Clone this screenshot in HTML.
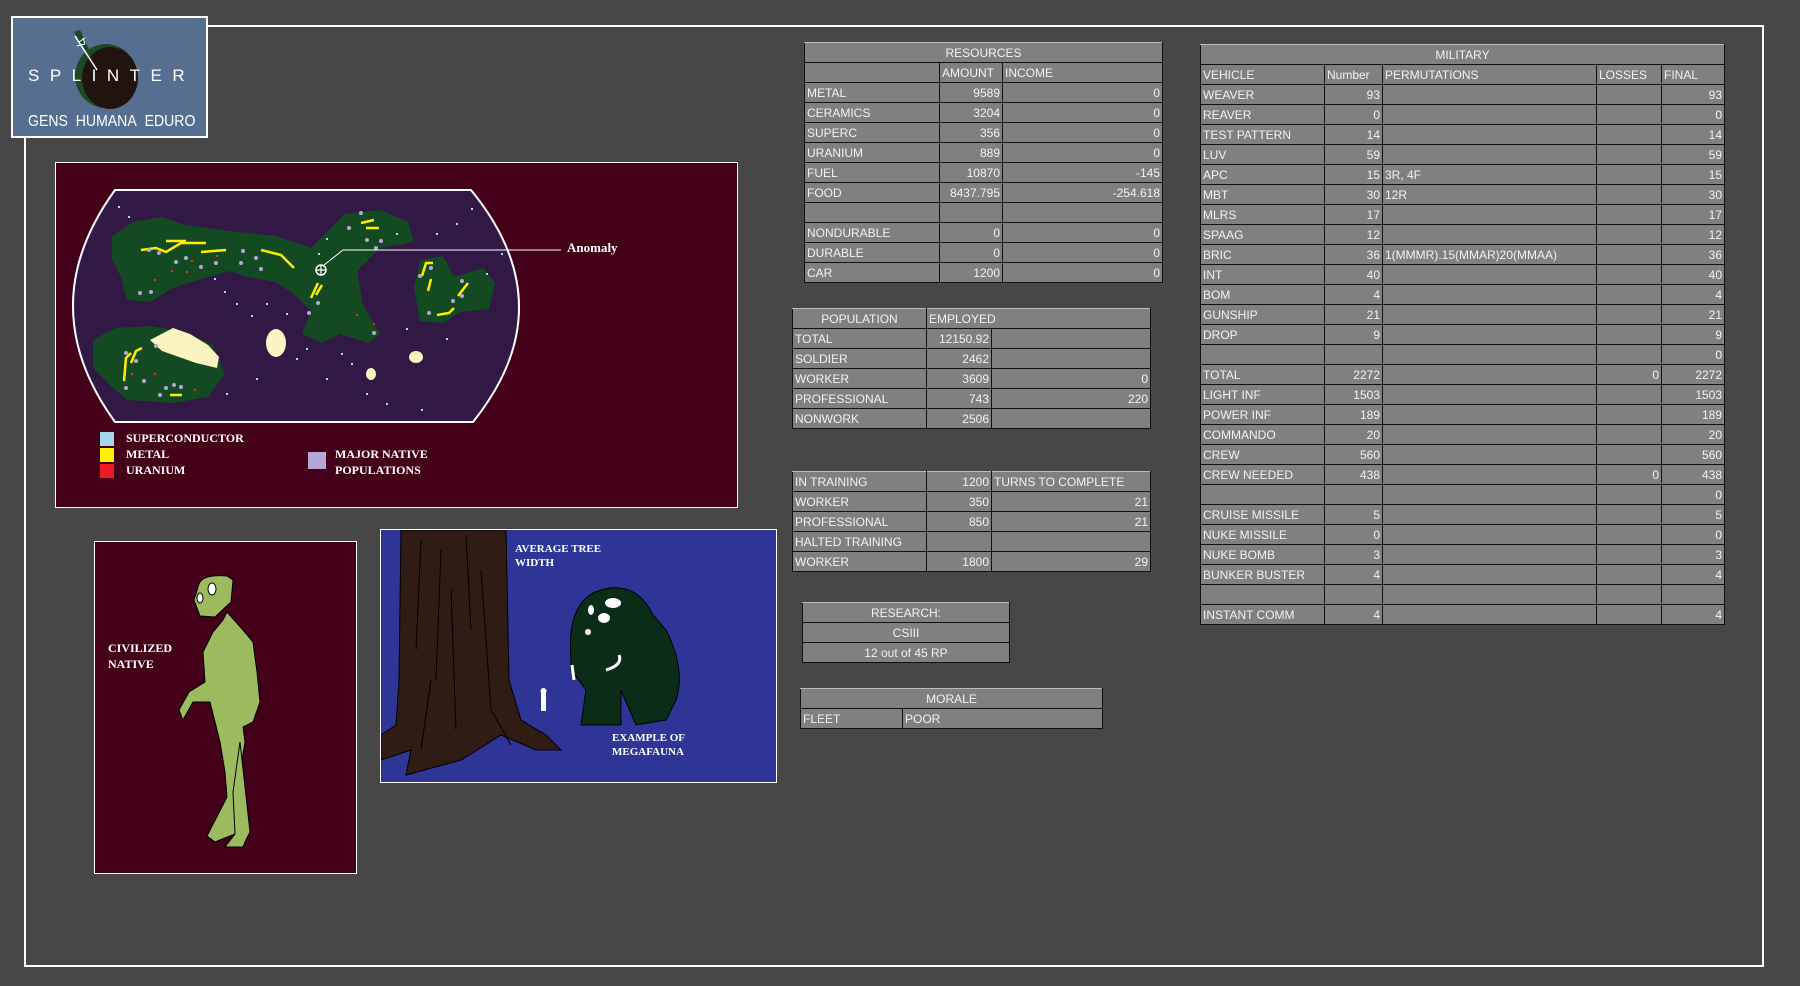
<!DOCTYPE html>
<html><head><meta charset="utf-8"><style>
body{margin:0;width:1800px;height:986px;background:#474747;position:relative;overflow:hidden;font-family:"Liberation Sans",sans-serif}
.abs{position:absolute}
table.t{position:absolute;border-collapse:collapse;table-layout:fixed}
table.t td{height:19px;border:1px solid #111;padding:0 2px;background:#808080;color:#f2f2f2;font:12px/18px "Liberation Sans",sans-serif;white-space:nowrap;overflow:hidden}
table.t tr:first-child td{border-top-color:#bbb}
.r{text-align:right}.c{text-align:center}
.lbl{position:absolute;font:bold 12px/16px "Liberation Serif",serif;color:#fff;white-space:nowrap}
</style></head><body>
<div class="abs" style="left:24px;top:25px;width:1736px;height:938px;border:2px solid #fff"></div>

<!-- logo -->
<div class="abs" style="left:11px;top:16px;width:193px;height:118px;background:#566f90;border:2px solid #fff;overflow:hidden">
<svg width="193" height="118" style="position:absolute;left:0;top:0">
<ellipse cx="93" cy="58" rx="31" ry="32" fill="#1d4a24"/>
<ellipse cx="97" cy="60" rx="28" ry="31" fill="#21140f"/>
<path d="M61 14 L67 12 L80 40 L70 30Z" fill="#1d4a24"/>
<path d="M62 18 L84 52" stroke="#fff" stroke-width="1.5"/>
<path d="M66 24 l6 -4 M64 28 l8 -2 M70 20 l2 6" stroke="#fff" stroke-width="1"/>
</svg>
<div class="abs" style="left:15px;top:48px;width:175px;color:#fff;font:17px/20px 'Liberation Sans',sans-serif;letter-spacing:10.5px;white-space:nowrap">SPLINTER</div>
<div class="abs" style="left:15px;top:95px;color:#fff;font:16px/18px 'Liberation Sans',sans-serif;white-space:nowrap;transform:scaleX(0.88);transform-origin:left">GENS&nbsp; HUMANA&nbsp; EDURO</div>
</div>

<!-- map -->
<div class="abs" style="left:55px;top:162px;width:681px;height:344px;background:#450019;border:1px solid #fff">
<svg width="683" height="346" class="abs" style="left:0;top:0">
<path d="M59 27 L415 27 Q510 143 417 259 L59 259 Q-25 143 59 27Z" fill="#311845" stroke="#fff" stroke-width="2"/>
<path d="M56 73 L77 59 L106 54 L129 62 L174 68 L220 73 L255 85 L278 62 L289 51 L324 47 L352 59 L358 79 L324 85 L301 108 L307 142 L324 171 L312 180 L284 171 L266 180 L246 171 L255 148 L238 131 L220 119 L192 114 L174 108 L152 114 L117 125 L94 139 L71 137 L65 114 L56 96Z" fill="#144a22"/>
<path d="M364 97 L387 93 L398 114 L427 105 L439 120 L433 146 L404 149 L387 160 L364 158 L358 125Z" fill="#144a22"/>
<path d="M37 177 L60 165 L94 163 L129 169 L157 182 L169 211 L152 234 L117 240 L71 237 L54 222 L37 205Z" fill="#144a22"/>
<path d="M94 177 L117 165 L134 171 L152 182 L163 194 L161 205 L140 200 L123 194 L106 188Z" fill="#fbf3c0"/>
<ellipse cx="220" cy="180" rx="10" ry="14" fill="#fbf3c0"/>
<ellipse cx="360" cy="194" rx="7" ry="6" fill="#fbf3c0"/>
<ellipse cx="315" cy="211" rx="5" ry="6" fill="#fbf3c0"/>
<g stroke="#ffee00" stroke-width="2.5" fill="none">
<path d="M85 87 L100 85 L110 89 L125 80 L150 80"/><path d="M110 78 L130 78"/><path d="M145 89 L170 87"/>
<path d="M205 87 L225 92 L238 105"/><path d="M305 60 L318 57"/><path d="M310 65 L323 65"/>
<path d="M366 113 L370 100 L377 100"/><path d="M372 128 L375 116"/><path d="M402 133 L412 120"/><path d="M381 152 L393 150 L398 145"/>
<path d="M255 135 L262 120"/><path d="M260 132 L266 122"/>
<path d="M68 218 L70 195 L75 190"/><path d="M75 200 L80 188 L86 185"/><path d="M114 232 L126 232"/>
</g>
<g fill="#b7a6d8">
<circle cx="93" cy="87" r="2"/><circle cx="103" cy="90" r="2"/><circle cx="130" cy="95" r="2"/><circle cx="145" cy="104" r="2"/><circle cx="160" cy="100" r="2"/><circle cx="185" cy="100" r="2"/><circle cx="200" cy="95" r="2"/><circle cx="187" cy="88" r="2"/><circle cx="120" cy="99" r="2"/><circle cx="84" cy="130" r="2"/><circle cx="95" cy="129" r="2"/><circle cx="205" cy="106" r="2"/>
<circle cx="305" cy="50" r="2"/><circle cx="293" cy="65" r="2"/><circle cx="311" cy="77" r="2"/><circle cx="325" cy="78" r="2"/><circle cx="320" cy="85" r="2"/>
<circle cx="375" cy="105" r="2"/><circle cx="364" cy="113" r="2"/><circle cx="406" cy="118" r="2"/><circle cx="406" cy="133" r="2"/><circle cx="397" cy="138" r="2"/><circle cx="373" cy="150" r="2"/>
<circle cx="262" cy="140" r="2"/><circle cx="253" cy="150" r="2"/><circle cx="318" cy="170" r="2"/>
<circle cx="70" cy="190" r="2"/><circle cx="100" cy="183" r="2"/><circle cx="80" cy="198" r="2"/><circle cx="88" cy="218" r="2"/><circle cx="70" cy="225" r="2"/><circle cx="118" cy="222" r="2"/><circle cx="125" cy="224" r="2"/><circle cx="110" cy="225" r="2"/><circle cx="104" cy="232" r="2"/>
</g>
<g fill="#ff2020"><rect x="135" y="97" width="2" height="2"/><rect x="160" y="92" width="2" height="2"/><rect x="115" y="107" width="2" height="2"/><rect x="98" y="116" width="2" height="2"/><rect x="130" y="108" width="2" height="2"/><rect x="300" y="151" width="2" height="2"/><rect x="317" y="160" width="2" height="2"/><rect x="75" y="210" width="2" height="2"/><rect x="98" y="210" width="2" height="2"/><rect x="138" y="226" width="2" height="2"/></g>
<g fill="#9fe0ee"><rect x="62" y="43" width="2" height="2"/><rect x="72" y="53" width="2" height="2"/><rect x="158" y="115" width="2" height="2"/><rect x="168" y="128" width="2" height="2"/><rect x="180" y="140" width="2" height="2"/><rect x="195" y="152" width="2" height="2"/><rect x="210" y="140" width="2" height="2"/><rect x="230" y="150" width="2" height="2"/><rect x="240" y="195" width="2" height="2"/><rect x="250" y="185" width="2" height="2"/><rect x="295" y="200" width="2" height="2"/><rect x="310" y="230" width="2" height="2"/><rect x="330" y="240" width="2" height="2"/><rect x="365" y="246" width="2" height="2"/><rect x="380" y="70" width="2" height="2"/><rect x="400" y="60" width="2" height="2"/><rect x="415" y="45" width="2" height="2"/><rect x="445" y="90" width="2" height="2"/><rect x="430" y="110" width="2" height="2"/><rect x="350" y="165" width="2" height="2"/><rect x="390" y="175" width="2" height="2"/><rect x="285" y="190" width="2" height="2"/><rect x="270" y="215" width="2" height="2"/><rect x="200" y="215" width="2" height="2"/><rect x="170" y="230" width="2" height="2"/><rect x="270" y="75" width="2" height="2"/><rect x="262" y="90" width="2" height="2"/><rect x="340" y="70" width="2" height="2"/></g>
<circle cx="265" cy="107" r="5" fill="none" stroke="#fff" stroke-width="1.5"/><path d="M260 107h10M265 102v10" stroke="#fff" stroke-width="1.2"/>
<path d="M268 102 L287 87 L505 87" stroke="#fff" stroke-width="1" fill="none"/>
<rect x="44" y="269" width="14" height="14" fill="#a3d8ea"/><rect x="44" y="285" width="14" height="14" fill="#fff200"/><rect x="44" y="301" width="14" height="14" fill="#ed1c24"/><rect x="252" y="289" width="18" height="17" fill="#b4a7d6"/>
</svg>
<div class="lbl" style="left:511px;top:77px;font-size:13px">Anomaly</div>
<div class="lbl" style="left:70px;top:267px">SUPERCONDUCTOR<br>METAL<br>URANIUM</div>
<div class="lbl" style="left:279px;top:283px">MAJOR NATIVE<br>POPULATIONS</div>
</div>

<!-- native -->
<div class="abs" style="left:94px;top:541px;width:261px;height:331px;background:#450019;border:1px solid #fff;overflow:hidden">
<svg width="263" height="333" class="abs" style="left:0;top:0">
<g fill="#9cbb5f" stroke="#000" stroke-width="1">
<path d="M104 42 Q108 32 132 34 L138 38 L136 60 L120 75 L105 74 L99 58Z"/>
<path d="M132 70 L148 88 L158 100 L162 130 L165 160 L158 180 L148 185 L150 200 L145 230 L150 250 L140 292 L120 300 L112 294 L132 255 L130 230 L125 200 L115 160 L98 160 L88 178 L84 168 L94 150 L110 140 L108 110 L118 90 L128 78Z"/>
<path d="M145 200 L150 245 L155 290 L150 300 L148 305 L130 305 L140 292 L138 250Z"/>
</g>
<ellipse cx="117" cy="47" rx="4" ry="6" fill="#fff" stroke="#000"/><ellipse cx="105" cy="56" rx="3" ry="5" fill="#fff" stroke="#000"/>
</svg>
<div class="lbl" style="left:13px;top:98px">CIVILIZED<br>NATIVE</div>
</div>

<!-- tree -->
<div class="abs" style="left:380px;top:529px;width:395px;height:252px;background:#2e3597;border:1px solid #fff;overflow:hidden">
<svg width="397" height="254" class="abs" style="left:0;top:0">
<path d="M20 0 L125 0 L128 150 L140 190 L165 205 L180 220 L155 220 L120 205 L80 230 L25 245 L30 220 L0 230 L0 205 L15 195 L18 150Z" fill="#311c15" stroke="#000"/>
<g stroke="#000" stroke-width="1"><path d="M40 10 L35 120 M60 20 L55 150 M85 5 L90 100 M100 40 L110 180 M70 60 L75 200 M50 150 L40 220 M110 180 L130 215"/></g>
<path d="M190 130 Q185 70 220 60 Q255 50 272 85 L285 100 Q305 140 295 170 L285 190 L255 195 L240 160 L240 195 L200 195 L205 160 L190 140Z" fill="#0b2d18" stroke="#000"/>
<ellipse cx="232" cy="73" rx="8" ry="5" fill="#fff"/><ellipse cx="223" cy="88" rx="6" ry="5" fill="#fff"/><ellipse cx="210" cy="80" rx="3" ry="5" fill="#fff"/><ellipse cx="207" cy="102" rx="3" ry="3" fill="#fff"/>
<path d="M225 140 Q242 135 238 125" stroke="#fff" stroke-width="3" fill="none"/>
<path d="M191 135 L193 150" stroke="#fff" stroke-width="3"/>
<rect x="160" y="163" width="5" height="18" fill="#fff"/><circle cx="162.5" cy="161" r="3" fill="#fff"/>
</svg>
<div class="lbl" style="left:134px;top:12px;font-size:11px;line-height:14px">AVERAGE TREE<br>WIDTH</div>
<div class="lbl" style="left:231px;top:201px;font-size:11px;line-height:14px">EXAMPLE OF<br>MEGAFAUNA</div>
</div>

<!-- resources -->
<table class="t" style="left:804px;top:42px;width:358px">
<colgroup><col style="width:135px"><col style="width:63px"><col style="width:160px"></colgroup>
<tr><td colspan="3" class="c">RESOURCES</td></tr>
<tr><td></td><td>AMOUNT</td><td>INCOME</td></tr>
<tr><td>METAL</td><td class="r">9589</td><td class="r">0</td></tr>
<tr><td>CERAMICS</td><td class="r">3204</td><td class="r">0</td></tr>
<tr><td>SUPERC</td><td class="r">356</td><td class="r">0</td></tr>
<tr><td>URANIUM</td><td class="r">889</td><td class="r">0</td></tr>
<tr><td>FUEL</td><td class="r">10870</td><td class="r">-145</td></tr>
<tr><td>FOOD</td><td class="r">8437.795</td><td class="r">-254.618</td></tr>
<tr><td></td><td></td><td></td></tr>
<tr><td>NONDURABLE</td><td class="r">0</td><td class="r">0</td></tr>
<tr><td>DURABLE</td><td class="r">0</td><td class="r">0</td></tr>
<tr><td>CAR</td><td class="r">1200</td><td class="r">0</td></tr>
</table>

<!-- population -->
<table class="t" style="left:792px;top:308px;width:358px">
<colgroup><col style="width:134px"><col style="width:65px"><col style="width:159px"></colgroup>
<tr><td class="c">POPULATION</td><td colspan="2">EMPLOYED</td></tr>
<tr><td>TOTAL</td><td class="r">12150.92</td><td></td></tr>
<tr><td>SOLDIER</td><td class="r">2462</td><td></td></tr>
<tr><td>WORKER</td><td class="r">3609</td><td class="r">0</td></tr>
<tr><td>PROFESSIONAL</td><td class="r">743</td><td class="r">220</td></tr>
<tr><td>NONWORK</td><td class="r">2506</td><td></td></tr>
</table>

<table class="t" style="left:792px;top:471px;width:358px">
<colgroup><col style="width:134px"><col style="width:65px"><col style="width:159px"></colgroup>
<tr><td>IN TRAINING</td><td class="r">1200</td><td>TURNS TO COMPLETE</td></tr>
<tr><td>WORKER</td><td class="r">350</td><td class="r">21</td></tr>
<tr><td>PROFESSIONAL</td><td class="r">850</td><td class="r">21</td></tr>
<tr><td>HALTED TRAINING</td><td></td><td></td></tr>
<tr><td>WORKER</td><td class="r">1800</td><td class="r">29</td></tr>
</table>

<table class="t" style="left:802px;top:602px;width:208px">
<tr><td class="c">RESEARCH:</td></tr>
<tr><td class="c">CSIII</td></tr>
<tr><td class="c">12 out of 45 RP</td></tr>
</table>

<table class="t" style="left:800px;top:688px;width:302px">
<colgroup><col style="width:102px"><col style="width:200px"></colgroup>
<tr><td colspan="2" class="c">MORALE</td></tr>
<tr><td>FLEET</td><td>POOR</td></tr>
</table>

<!-- military -->
<table class="t" style="left:1200px;top:44px;width:524px">
<colgroup><col style="width:124px"><col style="width:58px"><col style="width:214px"><col style="width:65px"><col style="width:63px"></colgroup>
<tr><td colspan="5" class="c">MILITARY</td></tr>
<tr><td>VEHICLE</td><td>Number</td><td>PERMUTATIONS</td><td>LOSSES</td><td>FINAL</td></tr>
<tr><td>WEAVER</td><td class="r">93</td><td></td><td></td><td class="r">93</td></tr>
<tr><td>REAVER</td><td class="r">0</td><td></td><td></td><td class="r">0</td></tr>
<tr><td>TEST PATTERN</td><td class="r">14</td><td></td><td></td><td class="r">14</td></tr>
<tr><td>LUV</td><td class="r">59</td><td></td><td></td><td class="r">59</td></tr>
<tr><td>APC</td><td class="r">15</td><td>3R, 4F</td><td></td><td class="r">15</td></tr>
<tr><td>MBT</td><td class="r">30</td><td>12R</td><td></td><td class="r">30</td></tr>
<tr><td>MLRS</td><td class="r">17</td><td></td><td></td><td class="r">17</td></tr>
<tr><td>SPAAG</td><td class="r">12</td><td></td><td></td><td class="r">12</td></tr>
<tr><td>BRIC</td><td class="r">36</td><td>1(MMMR).15(MMAR)20(MMAA)</td><td></td><td class="r">36</td></tr>
<tr><td>INT</td><td class="r">40</td><td></td><td></td><td class="r">40</td></tr>
<tr><td>BOM</td><td class="r">4</td><td></td><td></td><td class="r">4</td></tr>
<tr><td>GUNSHIP</td><td class="r">21</td><td></td><td></td><td class="r">21</td></tr>
<tr><td>DROP</td><td class="r">9</td><td></td><td></td><td class="r">9</td></tr>
<tr><td></td><td></td><td></td><td></td><td class="r">0</td></tr>
<tr><td>TOTAL</td><td class="r">2272</td><td></td><td class="r">0</td><td class="r">2272</td></tr>
<tr><td>LIGHT INF</td><td class="r">1503</td><td></td><td></td><td class="r">1503</td></tr>
<tr><td>POWER INF</td><td class="r">189</td><td></td><td></td><td class="r">189</td></tr>
<tr><td>COMMANDO</td><td class="r">20</td><td></td><td></td><td class="r">20</td></tr>
<tr><td>CREW</td><td class="r">560</td><td></td><td></td><td class="r">560</td></tr>
<tr><td>CREW NEEDED</td><td class="r">438</td><td></td><td class="r">0</td><td class="r">438</td></tr>
<tr><td></td><td></td><td></td><td></td><td class="r">0</td></tr>
<tr><td>CRUISE MISSILE</td><td class="r">5</td><td></td><td></td><td class="r">5</td></tr>
<tr><td>NUKE MISSILE</td><td class="r">0</td><td></td><td></td><td class="r">0</td></tr>
<tr><td>NUKE BOMB</td><td class="r">3</td><td></td><td></td><td class="r">3</td></tr>
<tr><td>BUNKER BUSTER</td><td class="r">4</td><td></td><td></td><td class="r">4</td></tr>
<tr><td></td><td></td><td></td><td></td><td></td></tr>
<tr><td>INSTANT COMM</td><td class="r">4</td><td></td><td></td><td class="r">4</td></tr>
</table>
</body></html>
